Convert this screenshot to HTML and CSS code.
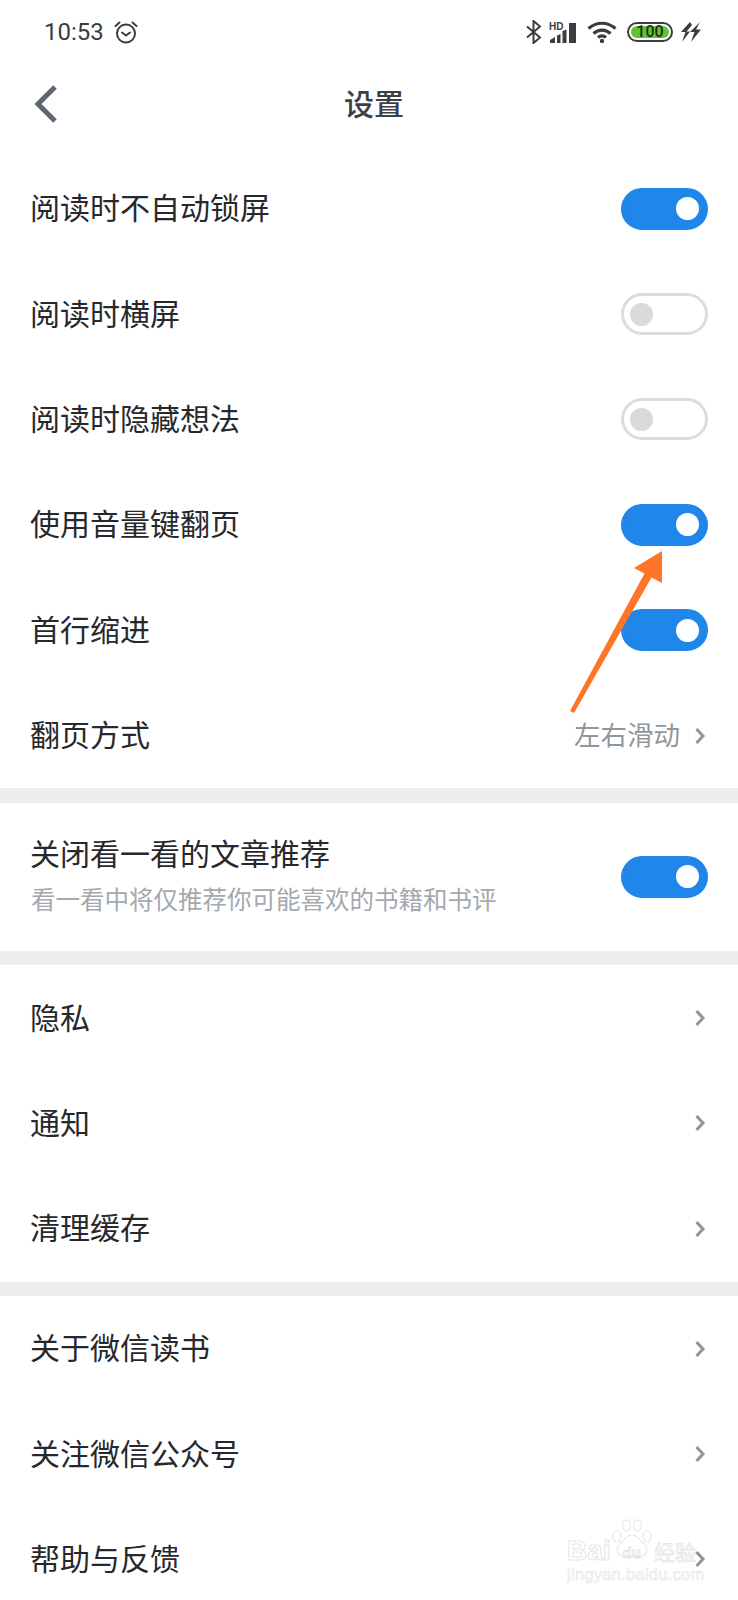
FILE: index.html
```html
<!DOCTYPE html>
<html lang="zh">
<head>
<meta charset="utf-8">
<title>设置</title>
<link rel="stylesheet" href="styles.css">
</head>
<body>
<div class="page">
  <div class="status">
    <div class="status-left">
      <span class="time">10:53</span>
      <svg class="alarm" width="24" height="24" viewBox="0 0 24 24" fill="none" stroke="#3a3d40" stroke-width="2"><circle cx="12" cy="13.5" r="9"/><path d="M8 12.5l4 3 4-3M1.500 6l4-3.500M22.500 6l-4-3.500" stroke-linecap="round"/></svg>
    </div>
    <div class="status-right">
      <svg width="16" height="24" viewBox="0 0 16 24" fill="none" stroke="#3a3d40" stroke-width="2"><path d="M1 6.500l13 11-6.500 5.500v-22l6.500 5.500-13 11"/></svg>
      <svg class="signal" width="30" height="24" viewBox="0 0 30 24" fill="#3a3d40"><path d="M1 23v-3l5-3v6zM8 23v-7.500l3.500-1.500v9zM13.500 23v-12l4-1.500v13.500zM20 23V3h7v20z"/><text x="0" y="10" class="hd">HD</text></svg>
      <svg class="wifi" width="30" height="22" viewBox="0 0 30 22" fill="none" stroke="#3a3d40" stroke-width="3.200"><path d="M1.500 7.500c8-7 19-7 27 0M6.500 12.500c5-4.500 12-4.500 17 0M11 16.500c2.500-2 5.500-2 8 0"/><circle cx="15" cy="20" r="2.200" fill="#3a3d40" stroke="none"/></svg>
      <div class="battery"><span class="battery-fill">100</span></div>
      <svg class="bolt" width="20" height="20" viewBox="0 0 20 20" fill="#3a3d40"><path d="M9 0L0 10h4.500L1 20l8-10.500H5.500L11 3zM19 0L9 10h4.500L10 20 20 7.500h-5z"/></svg>
    </div>
  </div>

  <header class="nav">
    <svg class="back" width="26" height="40" viewBox="0 0 26 40" fill="none" stroke="#5d6670" stroke-width="5"><path d="M22 3L5 20l17 17"/></svg>
    <h1 class="title">设置</h1>
  </header>

  <section>
    <div class="row"><span class="label">阅读时不自动锁屏</span><span class="switch on"></span></div>
    <div class="row"><span class="label">阅读时横屏</span><span class="switch"></span></div>
    <div class="row"><span class="label">阅读时隐藏想法</span><span class="switch"></span></div>
    <div class="row"><span class="label">使用音量键翻页</span><span class="switch on"></span></div>
    <div class="row"><span class="label">首行缩进</span><span class="switch on"></span></div>
    <div class="row"><span class="label">翻页方式</span><span class="right"><span class="value">左右滑动</span><svg class="chev" width="12" height="18" viewBox="0 0 12 18"><path d="M2.500 2l6.500 7-6.500 7"/></svg></span></div>
  </section>
  <div class="divider"></div>

  <section>
    <div class="row row-tall">
      <div class="stack"><span class="label">关闭看一看的文章推荐</span><span class="sub">看一看中将仅推荐你可能喜欢的书籍和书评</span></div>
      <span class="switch on"></span>
    </div>
  </section>
  <div class="divider"></div>

  <section>
    <div class="row"><span class="label">隐私</span><svg class="chev" width="12" height="18" viewBox="0 0 12 18"><path d="M2.500 2l6.500 7-6.500 7"/></svg></div>
    <div class="row"><span class="label">通知</span><svg class="chev" width="12" height="18" viewBox="0 0 12 18"><path d="M2.500 2l6.500 7-6.500 7"/></svg></div>
    <div class="row"><span class="label">清理缓存</span><svg class="chev" width="12" height="18" viewBox="0 0 12 18"><path d="M2.500 2l6.500 7-6.500 7"/></svg></div>
  </section>
  <div class="divider"></div>

  <section>
    <div class="row"><span class="label">关于微信读书</span><svg class="chev" width="12" height="18" viewBox="0 0 12 18"><path d="M2.500 2l6.500 7-6.500 7"/></svg></div>
    <div class="row"><span class="label">关注微信公众号</span><svg class="chev" width="12" height="18" viewBox="0 0 12 18"><path d="M2.500 2l6.500 7-6.500 7"/></svg></div>
    <div class="row"><span class="label">帮助与反馈</span><svg class="chev" width="12" height="18" viewBox="0 0 12 18"><path d="M2.500 2l6.500 7-6.500 7"/></svg></div>
  </section>

  <svg class="arrow" width="110" height="175" viewBox="0 0 110 175"><path d="M10 162L84.500 24.600 74 19 102 2V34L91.500 28.400 14 164z" fill="#ff7527"/></svg>

  <div class="mark">
    <svg class="paw" width="40" height="40" viewBox="0 0 50 50" fill="#fff" stroke="#e8e8e8" stroke-width="1.500"><ellipse cx="6" cy="22" rx="5" ry="7"/><ellipse cx="18" cy="8" rx="5" ry="7"/><ellipse cx="32" cy="8" rx="5" ry="7"/><ellipse cx="44" cy="22" rx="5" ry="7"/><path d="M25 20c-7 0-9 6-15 11-7 6-3 17 6 16 6-1 12-1 18 0 9 1 13-10 6-16-6-5-8-11-15-11z"/></svg>
    <div class="mark-main"><span class="mark-bai">Bai</span><span class="mark-du">du</span><span class="mark-cn">经验</span></div>
    <div class="mark-url">jingyan.baidu.com</div>
  </div>
</div>
</body>
</html>
```

FILE: styles.css
```css
* { box-sizing: border-box; }

html, body {
  margin: 0;
  padding: 0;
  background: #fff;
}

.page {
  position: relative;
  width: 738px;
  height: 1600px;
  overflow: hidden;
  font-family: "Noto Sans CJK SC", "Noto Sans", sans-serif;
  color: #26282b;
}

.status {
  height: 64px;
  display: flex;
  align-items: center;
  justify-content: space-between;
  padding: 0 37px 0 44px;
}

.status-left, .status-right {
  display: flex;
  align-items: center;
}

.time {
  font-family: Roboto, sans-serif;
  font-size: 24px;
  color: #3a3d40;
}

.alarm { margin-left: 10px; }

.signal { margin-left: 7px; }

.hd {
  font-family: "Liberation Sans", sans-serif;
  font-size: 10px;
  font-weight: 700;
}

.wifi { margin-left: 8px; }

.battery {
  width: 46px;
  height: 20px;
  margin-left: 10px;
  padding: 2px;
  border: 2px solid #3a3d40;
  border-radius: 10px;
  display: flex;
}

.battery-fill {
  flex: 1;
  background: #63c132;
  border-radius: 6px;
  font-family: Roboto, sans-serif;
  font-size: 16px;
  line-height: 12px;
  font-weight: 500;
  text-align: center;
  color: #1f2e17;
}

.bolt { margin-left: 8px; }

.nav {
  height: 92px;
  display: flex;
  align-items: center;
  justify-content: center;
  position: relative;
  padding: 0 0 17px 10px;
}

.back {
  position: absolute;
  left: 33px;
  top: 20px;
}

.title {
  margin: 0;
  font-size: 30px;
  font-weight: 500;
  line-height: 40px;
  color: #3c4046;
}

.divider {
  height: 14.500px;
  background: #ebedef;
}

.row {
  height: 105.400px;
  display: flex;
  align-items: center;
  justify-content: space-between;
  padding: 0 30px;
}

.row-tall { height: 148px; }

.label {
  font-size: 30px;
  line-height: 40px;
  margin-bottom: 5px;
  color: #26282b;
}

.stack {
  display: flex;
  flex-direction: column;
  margin-bottom: 5px;
}

.stack .label { margin-bottom: 0; }

.sub {
  font-size: 24.500px;
  line-height: 34px;
  margin: 10px 0 0 1px;
  color: #a3a9af;
}

.right {
  display: flex;
  align-items: center;
}

.value {
  font-size: 26.500px;
  line-height: 36px;
  margin-bottom: 4px;
  margin-right: 14px;
  color: #8f979e;
}

.chev {
  fill: none;
  stroke: #8e959c;
  stroke-width: 3px;
  margin-right: 2px;
}

.switch {
  position: relative;
  display: block;
  width: 87px;
  height: 42px;
  border: 3px solid #dcdcdc;
  border-radius: 21px;
  background: #fff;
}

.switch::after {
  content: "";
  position: absolute;
  left: 6px;
  top: 6.500px;
  width: 23px;
  height: 23px;
  border-radius: 50%;
  background: #dadada;
}

.switch.on {
  background: #1f86ea;
  border-color: #1f86ea;
}

.switch.on::after {
  left: auto;
  right: 6px;
  background: #fff;
}

.arrow {
  position: absolute;
  left: 560px;
  top: 549px;
}

.mark {
  position: absolute;
  left: 566px;
  top: 1519px;
  width: 140px;
  height: 70px;
  color: transparent;
  font-family: "Liberation Sans", sans-serif;
  pointer-events: none;
}

.paw {
  position: absolute;
  left: 46px;
  top: 0;
}

.mark-main {
  position: absolute;
  left: 1px;
  top: 15px;
  display: flex;
  align-items: center;
  font-size: 28px;
  line-height: 34px;
  font-weight: 700;
  -webkit-text-stroke: 1px #e6e6e6;
}

.mark-du {
  position: relative;
  top: 2px;
  margin-left: 12px;
  font-size: 15px;
  -webkit-text-stroke: 0.8px #e0e0e0;
}

.mark-cn {
  margin-left: 13px;
  font-family: "Noto Sans CJK SC", sans-serif;
  font-size: 21px;
  font-weight: 400;
  -webkit-text-stroke: 0.8px #e6e6e6;
}

.mark-url {
  position: absolute;
  left: 1px;
  top: 47px;
  font-size: 16px;
  line-height: 18px;
  letter-spacing: 0.5px;
  -webkit-text-stroke: 0.7px #e8e8e8;
}
```
